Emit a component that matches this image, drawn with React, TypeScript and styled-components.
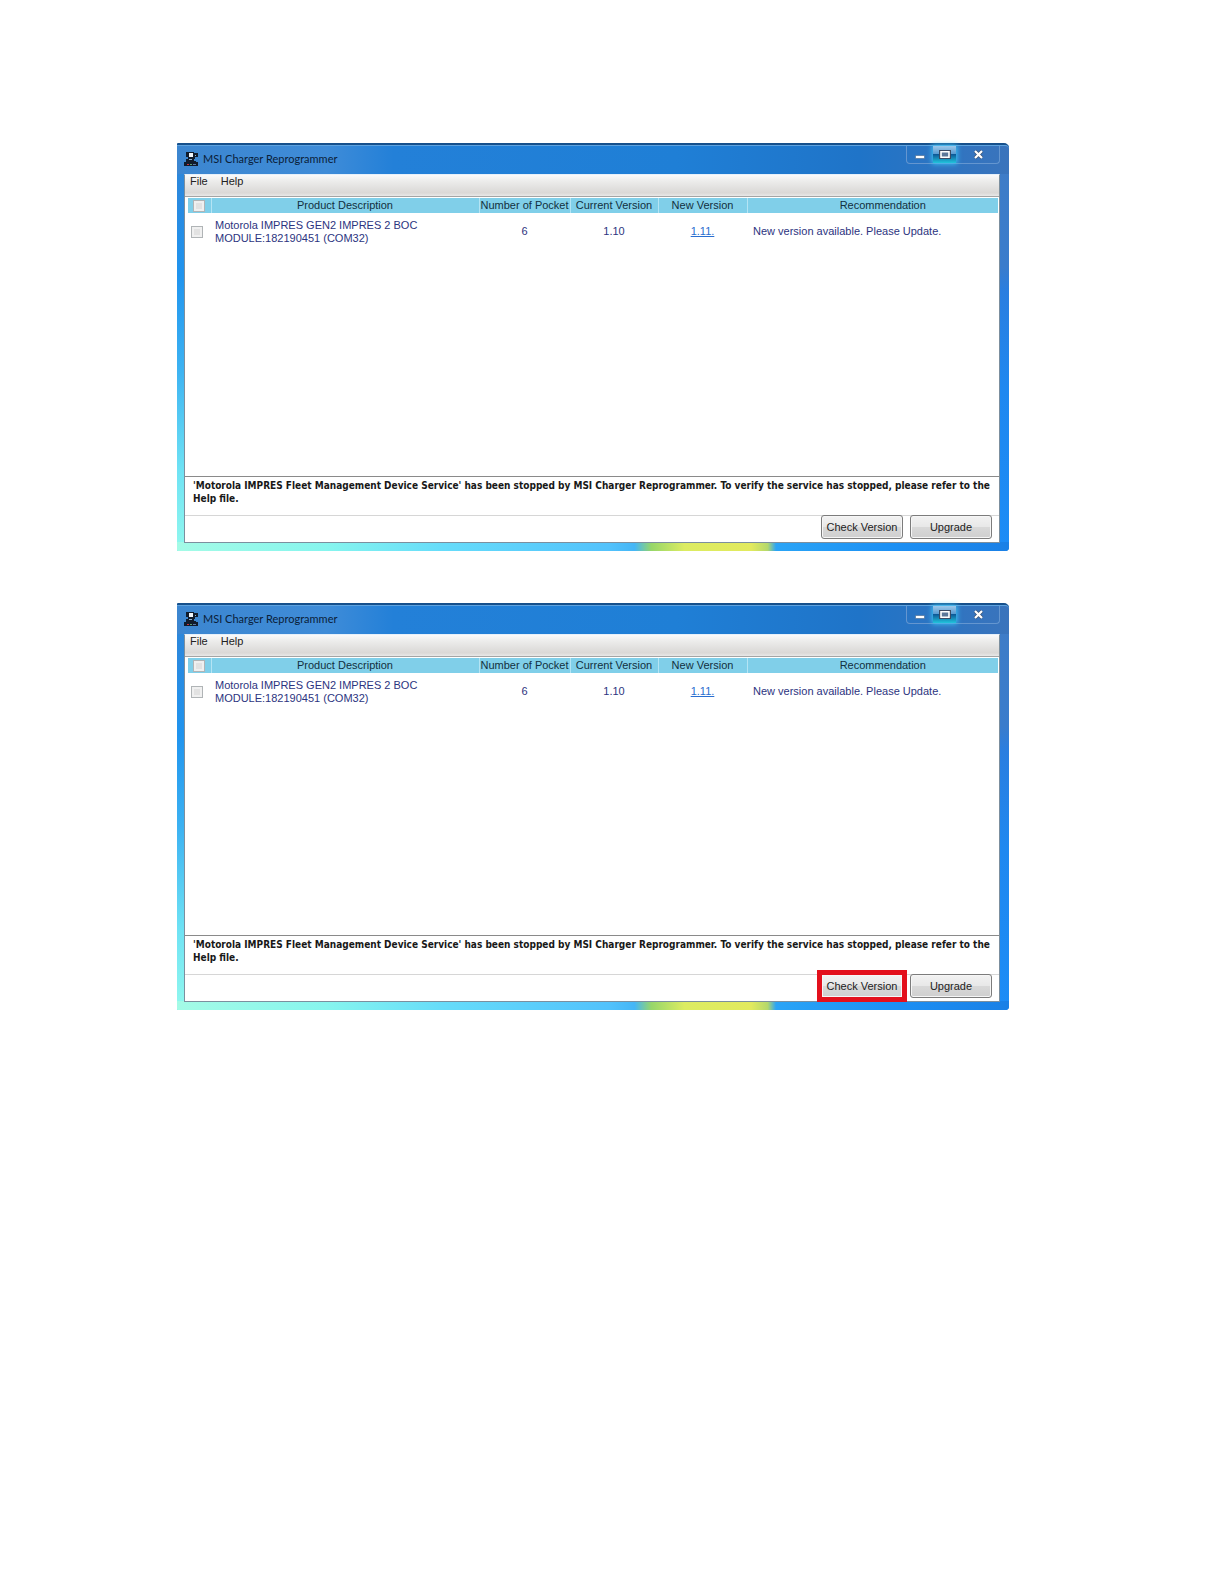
import React, { useId } from "react";
import styled, { createGlobalStyle } from "styled-components";

const GlobalStyle = createGlobalStyle`
  * { box-sizing: border-box; }
  body {
    margin: 0;
    background: #fff;
    color: #222;
    font: 11px/13px "Liberation Sans", Arial, sans-serif;
  }
`;

const Page = styled.main`
  display: flex;
  flex-direction: column;
  gap: 52px;
  padding: 143px 215px 143px 177px;
`;

const Frame = styled.section`
  display: flex;
  flex-direction: column;
  padding: 0 9px 8px 7px;
  border-top: 2px solid #16508c;
  border-radius: 1px 5px 4px 1px;
  background:
    linear-gradient(90deg, #a4fbe6 0%, #86f5ee 18%, #66dcfa 32%, #52c2fc 52%, #45b6f6 55%, #96d66a 57%, #dcec62 61%, #e2ea5e 69%, #b4d86c 71%, #2aa4f6 72%, #1c90f4 86%, #1a80e6 100%) bottom / 100% 9px no-repeat,
    linear-gradient(180deg, #2f84d6 0%, #2a8ae0 14%, #2094ee 32%, #3cb2f2 55%, #6ee2f4 80%, #92f8ee 100%) left / 8px 100% no-repeat,
    linear-gradient(180deg, #3f7cc6 0%, #3a7ccc 30%, #2a7ee0 36%, #1f88f0 60%, #1c8cf6 100%) right / 10px 100% no-repeat,
    #2480d8;
`;

const TitleBar = styled.header`
  display: flex;
  align-items: flex-start;
  justify-content: space-between;
  height: 29px;
  margin: 0 -9px 0 -7px;
  padding: 0 9px 0 7px;
  border-top: 1px solid #5ea2de;
  border-radius: 0 4px 0 0;
  background: linear-gradient(90deg, #3c86d0 0%, #3f8cd8 18%, #2380d8 26%, #1f7fd6 60%, #1f74c8 82%, #3a74bc 100%);
`;

const Caption = styled.h2`
  display: flex;
  align-items: center;
  gap: 4px;
  margin: 5px 0 0;
  color: #0a2038;
  font: 400 11px/16px Lato, "Open Sans", sans-serif;
`;

const CaptionButtons = styled.div`
  display: flex;
  height: 18px;
  border: 1px solid #6496d0;
  border-top: 0;
  border-radius: 0 0 4px 4px;
`;

const CaptionButton = styled.button<{ $width: number; $glow?: boolean }>`
  display: flex;
  align-items: center;
  justify-content: center;
  width: ${(p) => p.$width}px;
  padding: 0;
  border: 0;
  background: ${(p) =>
    p.$glow ? "linear-gradient(180deg, #9cc8ea 0%, #5a9cd2 45%, #0c5a98 50%, #22c4dc 100%)" : "transparent"};
  box-shadow: ${(p) => (p.$glow ? "0 0 5px 1px #3cc4f4" : "none")};
`;

const Client = styled.div`
  display: flex;
  flex-direction: column;
  border: 1px solid #7c8f9e;
  border-top-color: #e6f0fa;
  background: #fff;
`;

const MenuBar = styled.nav`
  display: flex;
  gap: 13px;
  height: 22px;
  padding: 0 5px;
  border-bottom: 1px solid #a4a4a4;
  background: linear-gradient(180deg, #fafafa 0%, #ececeb 30%, #dad8d6 85%, #e8e8e8 100%);
`;

const MenuItem = styled.button`
  height: 13px;
  padding: 0;
  border: 0;
  background: none;
  color: #222;
  font: inherit;
`;

const DeviceList = styled.div<{ $height: number }>`
  min-height: ${(p) => p.$height}px;
  padding: 1px 1px 0 3px;
  border-bottom: 1px solid #8a8a8a;
`;

const Table = styled.table`
  width: 100%;
  table-layout: fixed;
  border-collapse: collapse;
`;

const HeadCell = styled.th<{ $width?: number }>`
  width: ${(p) => (p.$width ? `${p.$width}px` : "auto")};
  height: 15px;
  padding: 0;
  border-right: 1px solid #b4e4f4;
  background: #80cfe9;
  color: #123040;
  font-weight: 400;
  white-space: nowrap;

  &:last-child {
    padding-left: 20px;
    border-right: 0;
  }
`;

const Cell = styled.td<{ $align?: "left" | "center" }>`
  height: 37px;
  padding: ${(p) => (p.$align === "left" ? "0 0 0 4px" : "0")};
  color: #2c3480;
  text-align: ${(p) => p.$align ?? "center"};

  &:last-child {
    padding-left: 6px;
  }
`;

const Tick = styled.input<{ $inset: number }>`
  appearance: none;
  display: block;
  width: 12px;
  height: 12px;
  margin: 0 0 0 ${(p) => p.$inset}px;
  border: 1px solid #b0b4b6;
  background: #e2e2e2;
  box-shadow: inset 0 0 0 2px #f0f0f0;
`;

const VersionLink = styled.a`
  color: #2a6ed0;
  text-decoration: underline;
`;

const Status = styled.p`
  height: 38px;
  margin: 0;
  padding: 2px 0 0 8px;
  color: #181818;
  font-family: "DejaVu Sans Condensed", "Liberation Sans", sans-serif;
  font-size: 10px;
  font-weight: 700;
`;

const Actions = styled.footer`
  display: flex;
  justify-content: flex-end;
  gap: 7px;
  height: 27px;
  padding-right: 7px;
  border-top: 1px solid #d6d6d6;
`;

const Action = styled.button<{ $marked?: boolean }>`
  width: 82px;
  height: 24px;
  margin-top: -1px;
  padding: 0;
  border: 1px solid #7c7c7c;
  border-radius: ${(p) => (p.$marked ? 0 : 3)}px;
  outline: ${(p) => (p.$marked ? "5px solid #e3101c" : "none")};
  outline-offset: -1px;
  background: linear-gradient(180deg, #f2f2f2 0%, #e8e8e8 48%, #d8d8d8 52%, #cfcfcf 100%);
  box-shadow: inset 0 0 0 1px #f6f6f6;
  color: #222;
  font: inherit;
`;

const AppIcon = () => (
  <svg width="15" height="15" viewBox="0 0 15 15" aria-hidden="true">
    <path d="M2 0h8v1h4v4h-3v2h-1v2h2v1h2v4H0v-4h2V7h2V5H2z" fill="#101c2c" />
    <path d="M5 1h4v4H5z" fill="#eef4fa" />
    <path d="M5 7h3v1H5zM11 3h1v1h-1z" fill="#8fb0d0" />
    <path d="M3 12h2v1H3z" fill="#d03040" />
    <path d="M6 12h2v1H6z" fill="#58a070" />
    <path d="M9 12h3v1H9z" fill="#5878a8" />
  </svg>
);

const MinimizeIcon = () => (
  <svg width="12" height="12" viewBox="0 0 12 12" aria-hidden="true">
    <path d="M1.5 6.5h9v3h-9z" fill="#fff" stroke="#45658c" strokeWidth="0.6" />
  </svg>
);

const MaximizeIcon = () => (
  <svg width="12" height="12" viewBox="0 0 12 12" aria-hidden="true">
    <path d="M0 1h12v9H0z" fill="#3c4c64" />
    <path d="M2 2.8h8v5.4H2z" fill="#5c7898" stroke="#fff" strokeWidth="1.6" />
  </svg>
);

const CloseIcon = () => (
  <svg width="12" height="12" viewBox="0 0 12 12" aria-hidden="true">
    <path d="M3 2l7 7M10 2l-7 7" stroke="#3c5678" strokeWidth="3.6" />
    <path d="M3 2l7 7M10 2l-7 7" stroke="#fff" strokeWidth="2.2" />
  </svg>
);

type WindowProps = { listHeight: number; markCheck?: boolean };

function ReprogrammerWindow({ listHeight, markCheck }: WindowProps) {
  const id = useId();
  return (
    <Frame aria-labelledby={id}>
      <TitleBar>
        <Caption id={id}>
          <AppIcon />
          MSI Charger Reprogrammer
        </Caption>
        <CaptionButtons>
          <CaptionButton $width={26} aria-label="Minimize"><MinimizeIcon /></CaptionButton>
          <CaptionButton $width={23} $glow aria-label="Maximize"><MaximizeIcon /></CaptionButton>
          <CaptionButton $width={43} aria-label="Close"><CloseIcon /></CaptionButton>
        </CaptionButtons>
      </TitleBar>
      <Client>
        <MenuBar>
          <MenuItem>File</MenuItem>
          <MenuItem>Help</MenuItem>
        </MenuBar>
        <DeviceList $height={listHeight}>
          <Table>
            <thead>
              <tr>
                <HeadCell $width={23}><Tick type="checkbox" $inset={5} aria-label="Select all devices" /></HeadCell>
                <HeadCell $width={268}>Product Description</HeadCell>
                <HeadCell $width={91}>Number of Pocket</HeadCell>
                <HeadCell $width={88}>Current Version</HeadCell>
                <HeadCell $width={89}>New Version</HeadCell>
                <HeadCell>Recommendation</HeadCell>
              </tr>
            </thead>
            <tbody>
              <tr>
                <Cell><Tick type="checkbox" $inset={3} aria-label="Select device" /></Cell>
                <Cell $align="left">
                  Motorola IMPRES GEN2 IMPRES 2 BOC
                  <br />
                  MODULE:182190451 (COM32)
                </Cell>
                <Cell>6</Cell>
                <Cell>1.10</Cell>
                <Cell><VersionLink href="#release">1.11.</VersionLink></Cell>
                <Cell $align="left">New version available. Please Update.</Cell>
              </tr>
            </tbody>
          </Table>
        </DeviceList>
        <Status>
          'Motorola IMPRES Fleet Management Device Service' has been stopped by MSI Charger Reprogrammer. To
          verify the service has stopped, please refer to the Help file.
        </Status>
        <Actions>
          <Action $marked={markCheck}>Check Version</Action>
          <Action>Upgrade</Action>
        </Actions>
      </Client>
    </Frame>
  );
}

export default function App() {
  return (
    <>
      <GlobalStyle />
      <Page>
        <ReprogrammerWindow listHeight={280} />
        <ReprogrammerWindow listHeight={279} markCheck />
      </Page>
    </>
  );
}
